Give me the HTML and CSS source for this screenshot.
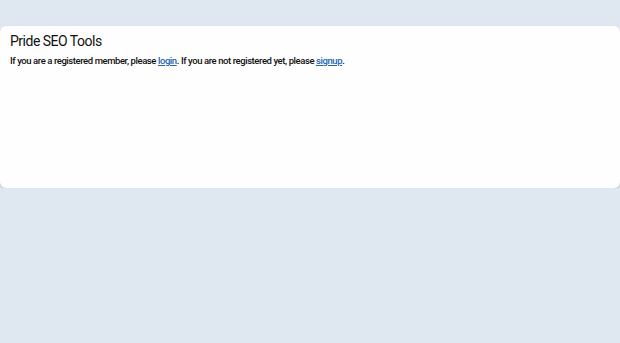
FILE: index.html
```html
<!DOCTYPE html>
<html lang="en">
<head>
    <meta charset="UTF-8">
    <meta name="viewport" content="width=device-width, initial-scale=1.0">
    <title>Pride SEO Tools</title>
    <link rel="stylesheet" href="styles.css">
</head>
<body>
    <div class="page">
        <div class="card">
            <h1>Pride SEO Tools</h1>
            <p class="note">
                If you are a registered member, please <a href="#">login</a>. If you are not registered yet, please <a href="#">signup</a>.
            </p>
        </div>
    </div>
</body>
</html>
```

FILE: styles.css
```css
body {
    margin: 0;
    padding: 0;
    font-family: Roboto, "Liberation Sans", Arial, sans-serif;
    background-color: #dfe7f1;
    color: #111;
}
.page {
    padding-top: 26px;
}
.card {
    background-color: #fefefe;
    border-radius: 6px;
    box-shadow: 0 1px 2px rgba(0, 0, 0, 0.18);
    height: 162px;
    padding: 7px 10px;
    box-sizing: border-box;
}
h1 {
    font-size: 14px;
    font-weight: 400;
    letter-spacing: -0.5px;
    margin: 0 0 6px 0;
}
.note {
    font-size: 9.5px;
    font-weight: 500;
    letter-spacing: -0.42px;
    margin: 0;
}
.note a {
    color: #2264b0;
}
```
